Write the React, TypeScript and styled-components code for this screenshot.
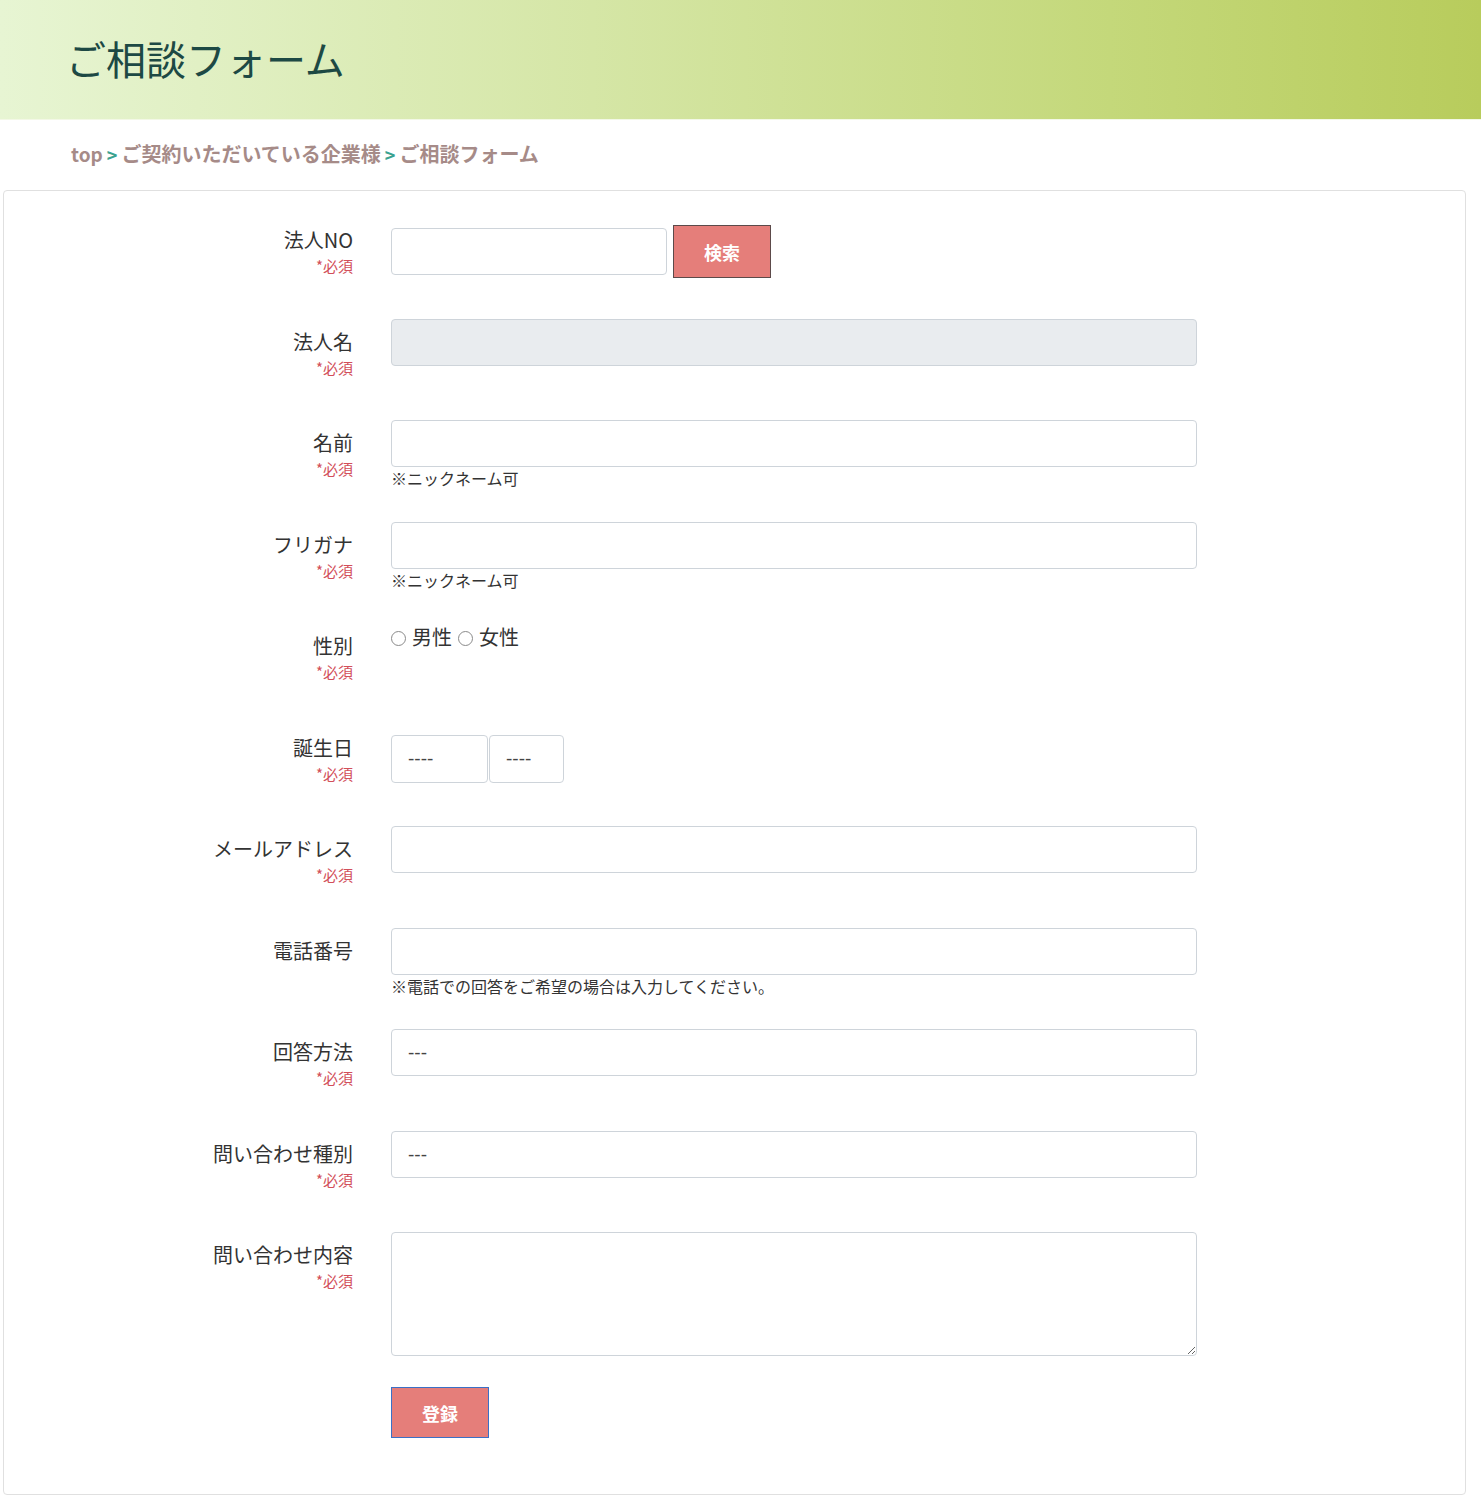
import React from 'react';
import styled, { createGlobalStyle } from 'styled-components';

const GlobalStyle = createGlobalStyle`
  body {
    margin: 0;
    background: #fff;
    font-family: "Noto Sans CJK JP", "Noto Sans", sans-serif;
    color: #333;
  }
`;

const PageHeader = styled.header`
  height: 120px;
  display: flex;
  align-items: center;
  padding-left: 66px;
  padding-bottom: 4px;
  background: linear-gradient(90deg, #e7f5d3 0%, #d5e6a6 40%, #c4d87a 75%, #b8cc5c 100%);
  border-bottom: 1px solid #f3f8e6;
  box-sizing: border-box;
`;

const PageTitle = styled.h1`
  margin: 0;
  font-size: 40px;
  font-weight: 400;
  color: #1d4944;
`;

const Breadcrumb = styled.nav`
  height: 70px;
  display: flex;
  align-items: center;
  padding-left: 71px;
  padding-bottom: 3px;
  box-sizing: border-box;
  font-size: 20px;
  font-weight: 700;
  color: #a68b88;
`;

const Crumb = styled.span<{ $small?: boolean }>`
  font-size: ${(p) => (p.$small ? 19 : 20)}px;
`;

const CrumbSep = styled.span`
  color: #3aa290;
  font-size: 18px;
  margin: 0 4px;
`;

const Card = styled.form`
  margin: 0 15px 16px 3px;
  border: 1px solid #e0e0e0;
  border-radius: 4px;
  padding: 26px 0 56px;
`;

const Row = styled.div<{ $tall?: boolean }>`
  display: grid;
  grid-template-columns: 349px 806px;
  column-gap: 38px;
  min-height: ${(p) => (p.$tall ? 'auto' : '101.5px')};
  align-items: start;
`;

const LabelBlock = styled.div`
  text-align: right;
  padding-top: 10px;
`;

const LabelName = styled.div`
  font-size: 20px;
  line-height: 26px;
  color: #333;
`;

const Required = styled.div`
  font-size: 15px;
  line-height: 26px;
  color: #d24f5a;
`;

const Field = styled.div<{ $offset?: number }>`
  padding-top: ${(p) => p.$offset ?? 0}px;
`;

const Inline = styled.div<{ $gap?: number }>`
  display: flex;
  align-items: center;
  gap: ${(p) => p.$gap ?? 0}px;
`;

const TextInput = styled.input<{ $width?: number }>`
  box-sizing: border-box;
  width: ${(p) => (p.$width ? `${p.$width}px` : '100%')};
  height: 47px;
  border: 1px solid #ced4da;
  border-radius: 4px;
  background: #fff;
  padding: 0 16px;
  font-size: 16px;
  font-family: inherit;
  &:disabled {
    background: #e9ecef;
  }
`;

const Select = styled.select<{ $width?: number }>`
  box-sizing: border-box;
  width: ${(p) => (p.$width ? `${p.$width}px` : '100%')};
  height: ${(p) => (p.$width ? 48 : 47)}px;
  border: 1px solid #ced4da;
  border-radius: 4px;
  background: #fff;
  padding: 0 16px;
  font-size: 19px;
  font-family: "Liberation Sans", Arial, sans-serif;
  color: #444;
  appearance: none;
  -webkit-appearance: none;
`;

const TextArea = styled.textarea`
  box-sizing: border-box;
  display: block;
  width: 100%;
  height: 124px;
  border: 1px solid #ced4da;
  border-radius: 4px;
  padding: 8px 16px;
  font-family: inherit;
  font-size: 16px;
`;

const Help = styled.div`
  font-size: 16px;
  line-height: 22px;
  color: #333;
`;

const PinkButton = styled.button<{ $focus?: boolean }>`
  box-sizing: border-box;
  width: 98px;
  height: ${(p) => (p.$focus ? 51 : 53)}px;
  background: #e57e7a;
  border: 1px solid ${(p) => (p.$focus ? '#3b70c6' : '#5c4a4a')};
  color: #fff;
  font-family: inherit;
  font-size: 18px;
  font-weight: 700;
  cursor: pointer;
  padding: 0;
`;

const RadioGroup = styled.div`
  display: flex;
  align-items: center;
  height: 28px;
  gap: 6px;
`;

const RadioLabel = styled.label`
  display: flex;
  align-items: center;
  gap: 6px;
  font-size: 20px;
  line-height: 28px;
  color: #333;
`;

const Radio = styled.input`
  appearance: none;
  -webkit-appearance: none;
  margin: 3px 0 0;
  width: 15px;
  height: 15px;
  border: 1px solid #8a8a8a;
  border-radius: 50%;
  background: #fff;
`;

const SubmitRow = styled.div`
  padding: 31px 0 0 387px;
`;

type RowDef = {
  label: string;
  required?: boolean;
  children: React.ReactNode;
  tall?: boolean;
};

const FormRow: React.FC<RowDef> = ({ label, required = true, children, tall }) => (
  <Row $tall={tall}>
    <LabelBlock>
      <LabelName>{label}</LabelName>
      {required && <Required>*必須</Required>}
    </LabelBlock>
    {children}
  </Row>
);

const App: React.FC = () => {
  return (
    <>
      <GlobalStyle />
      <PageHeader>
        <PageTitle>ご相談フォーム</PageTitle>
      </PageHeader>
      <Breadcrumb>
        <Crumb $small>top</Crumb>
        <CrumbSep>&gt;</CrumbSep>
        <Crumb>ご契約いただいている企業様</Crumb>
        <CrumbSep>&gt;</CrumbSep>
        <Crumb>ご相談フォーム</Crumb>
      </Breadcrumb>
      <Card onSubmit={(e) => e.preventDefault()}>
        <FormRow label="法人NO">
          <Field $offset={8}>
            <Inline $gap={6}>
              <TextInput $width={276} />
              <PinkButton type="button">検索</PinkButton>
            </Inline>
          </Field>
        </FormRow>
        <FormRow label="法人名">
          <Field>
            <TextInput disabled />
          </Field>
        </FormRow>
        <FormRow label="名前">
          <Field>
            <TextInput />
            <Help>※ニックネーム可</Help>
          </Field>
        </FormRow>
        <FormRow label="フリガナ">
          <Field>
            <TextInput />
            <Help>※ニックネーム可</Help>
          </Field>
        </FormRow>
        <FormRow label="性別">
          <Field $offset={0}>
            <RadioGroup>
              <RadioLabel>
                <Radio type="radio" name="gender" />
                男性
              </RadioLabel>
              <RadioLabel>
                <Radio type="radio" name="gender" />
                女性
              </RadioLabel>
            </RadioGroup>
          </Field>
        </FormRow>
        <FormRow label="誕生日">
          <Field $offset={10}>
            <Inline $gap={1}>
              <Select $width={97} defaultValue="">
                <option value="">----</option>
              </Select>
              <Select $width={75} defaultValue="">
                <option value="">----</option>
              </Select>
            </Inline>
          </Field>
        </FormRow>
        <FormRow label="メールアドレス">
          <Field>
            <TextInput />
          </Field>
        </FormRow>
        <FormRow label="電話番号" required={false}>
          <Field>
            <TextInput />
            <Help>※電話での回答をご希望の場合は入力してください。</Help>
          </Field>
        </FormRow>
        <FormRow label="回答方法">
          <Field>
            <Select defaultValue="">
              <option value="">---</option>
            </Select>
          </Field>
        </FormRow>
        <FormRow label="問い合わせ種別">
          <Field>
            <Select defaultValue="">
              <option value="">---</option>
            </Select>
          </Field>
        </FormRow>
        <FormRow label="問い合わせ内容" tall>
          <Field>
            <TextArea />
          </Field>
        </FormRow>
        <SubmitRow>
          <PinkButton type="submit" $focus>
            登録
          </PinkButton>
        </SubmitRow>
      </Card>
    </>
  );
};

export default App;
